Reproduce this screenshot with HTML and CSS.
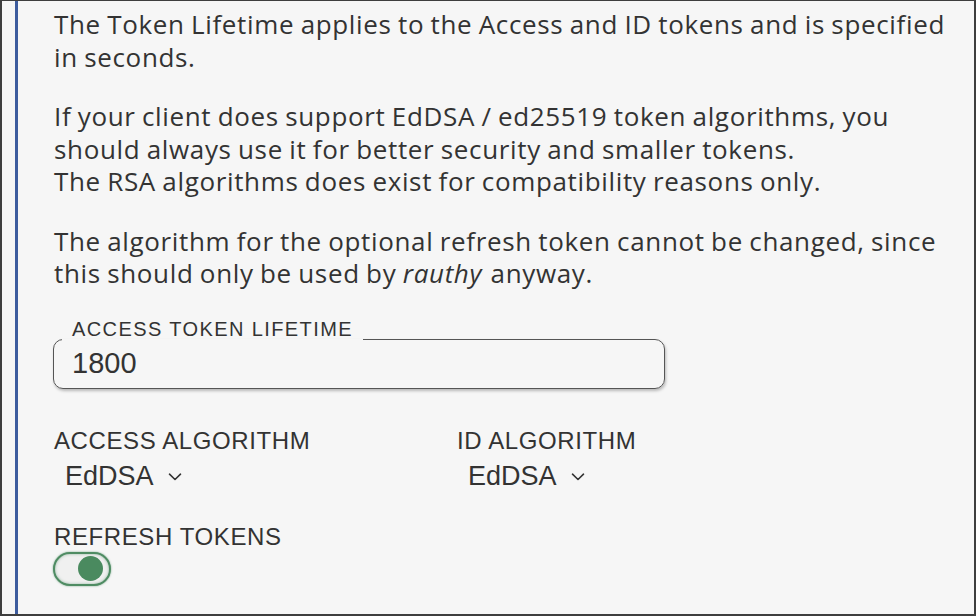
FILE: index.html
```html
<!DOCTYPE html>
<html lang="en">
<head>
<meta charset="utf-8">
<title>Token settings</title>
<link rel="stylesheet" href="styles.css">
</head>
<body>
<div class="frame">
  <section class="panel">
    <p class="desc">The Token Lifetime applies to the Access and ID tokens and is specified in seconds.</p>
    <p class="desc">If your client does support EdDSA / ed25519 token algorithms, you should always use it for better security and smaller tokens.<br>The RSA algorithms does exist for compatibility reasons only.</p>
    <p class="desc">The algorithm for the optional refresh token cannot be changed, since this should only be used by <i>rauthy</i> anyway.</p>

    <fieldset class="field">
      <legend class="field-label">ACCESS TOKEN LIFETIME</legend>
      <input class="field-input" type="text" value="1800">
    </fieldset>

    <div class="algos">
      <div class="algo">
        <div class="label">ACCESS ALGORITHM</div>
        <div class="select">EdDSA
          <svg class="chev" width="14" height="8" viewBox="0 0 14 8"><path d="M1.5 1.2 L7 6.5 L12.5 1.2" fill="none" stroke="#333" stroke-width="1.6" stroke-linecap="round" stroke-linejoin="round"/></svg>
        </div>
      </div>
      <div class="algo">
        <div class="label">ID ALGORITHM</div>
        <div class="select">EdDSA
          <svg class="chev" width="14" height="8" viewBox="0 0 14 8"><path d="M1.5 1.2 L7 6.5 L12.5 1.2" fill="none" stroke="#333" stroke-width="1.6" stroke-linecap="round" stroke-linejoin="round"/></svg>
        </div>
      </div>
    </div>

    <div class="refresh">
      <div class="label">REFRESH TOKENS</div>
      <div class="toggle"><span class="knob"></span></div>
    </div>
  </section>
</div>
</body>
</html>
```

FILE: styles.css
```css
html, body {
  margin: 0;
  padding: 0;
  background: #f6f6f6;
}

.frame {
  box-sizing: border-box;
  width: 976px;
  height: 616px;
  border-top: 1px solid #3e3e3e;
  border-left: 2px solid #3e3e3e;
  border-right: 2px solid #3e3e3e;
  border-bottom: 2px solid #3e3e3e;
  background: #f6f6f6;
  padding-left: 13px;
  overflow: hidden;
}

.panel {
  box-sizing: border-box;
  height: 100%;
  border-left: 3px solid #3d5c9e;
  padding: 7px 20px 0 36px;
  color: #333;
}

.desc {
  margin: 0 0 27px 0;
  font-family: "Open Sans", "Noto Sans", sans-serif;
  font-size: 26px;
  line-height: 32.5px;
  letter-spacing: 0.65px;
  word-spacing: -1px;
}

.desc i {
  margin-right: 2px;
}

.field {
  margin: 0 0 0 -1px;
  width: 612px;
  box-sizing: border-box;
  border: 1px solid #555;
  border-radius: 10px;
  padding: 0 8px 8px 8px;
  box-shadow: 1px 2px 3px rgba(0, 0, 0, 0.25);
}

.field-label {
  padding: 1px 10px 21px 10px;
  font-family: "Liberation Sans", Arial, sans-serif;
  font-size: 20px;
  line-height: 23px;
  letter-spacing: 1.4px;
  color: #333;
}

.field-input {
  display: block;
  margin-top: -16px;
  width: 100%;
  box-sizing: border-box;
  border: 0;
  background: transparent;
  padding: 0 10px;
  font-family: "Liberation Sans", Arial, sans-serif;
  font-size: 29px;
  line-height: 34px;
  height: 34px;
  color: #333;
  outline: none;
}

.algos {
  display: flex;
  margin-top: 38px;
}

.algo {
  width: 403px;
}

.label {
  font-family: "Liberation Sans", Arial, sans-serif;
  font-size: 24px;
  line-height: 28px;
  letter-spacing: 0.6px;
  color: #333;
}

.select {
  display: flex;
  align-items: center;
  margin-top: 6px;
  padding-left: 11px;
  font-family: "Liberation Sans", Arial, sans-serif;
  font-size: 27px;
  line-height: 31px;
  color: #333;
}

.chev {
  margin-left: 14px;
  margin-top: 2px;
}

.refresh {
  margin-top: 31px;
}

.toggle {
  box-sizing: border-box;
  width: 58px;
  height: 34px;
  margin-left: -1px;
  margin-top: 1px;
  border: 2px solid #4f8c63;
  border-radius: 17px;
  background: #f0f0f0;
  box-shadow: 0 0 2px rgba(60, 130, 85, 0.7), inset 0 0 3px rgba(60, 130, 85, 0.5);
  display: flex;
  align-items: center;
  justify-content: flex-end;
  padding-right: 6px;
}

.knob {
  width: 25px;
  height: 25px;
  border-radius: 50%;
  background: #4a8a5f;
}
```
